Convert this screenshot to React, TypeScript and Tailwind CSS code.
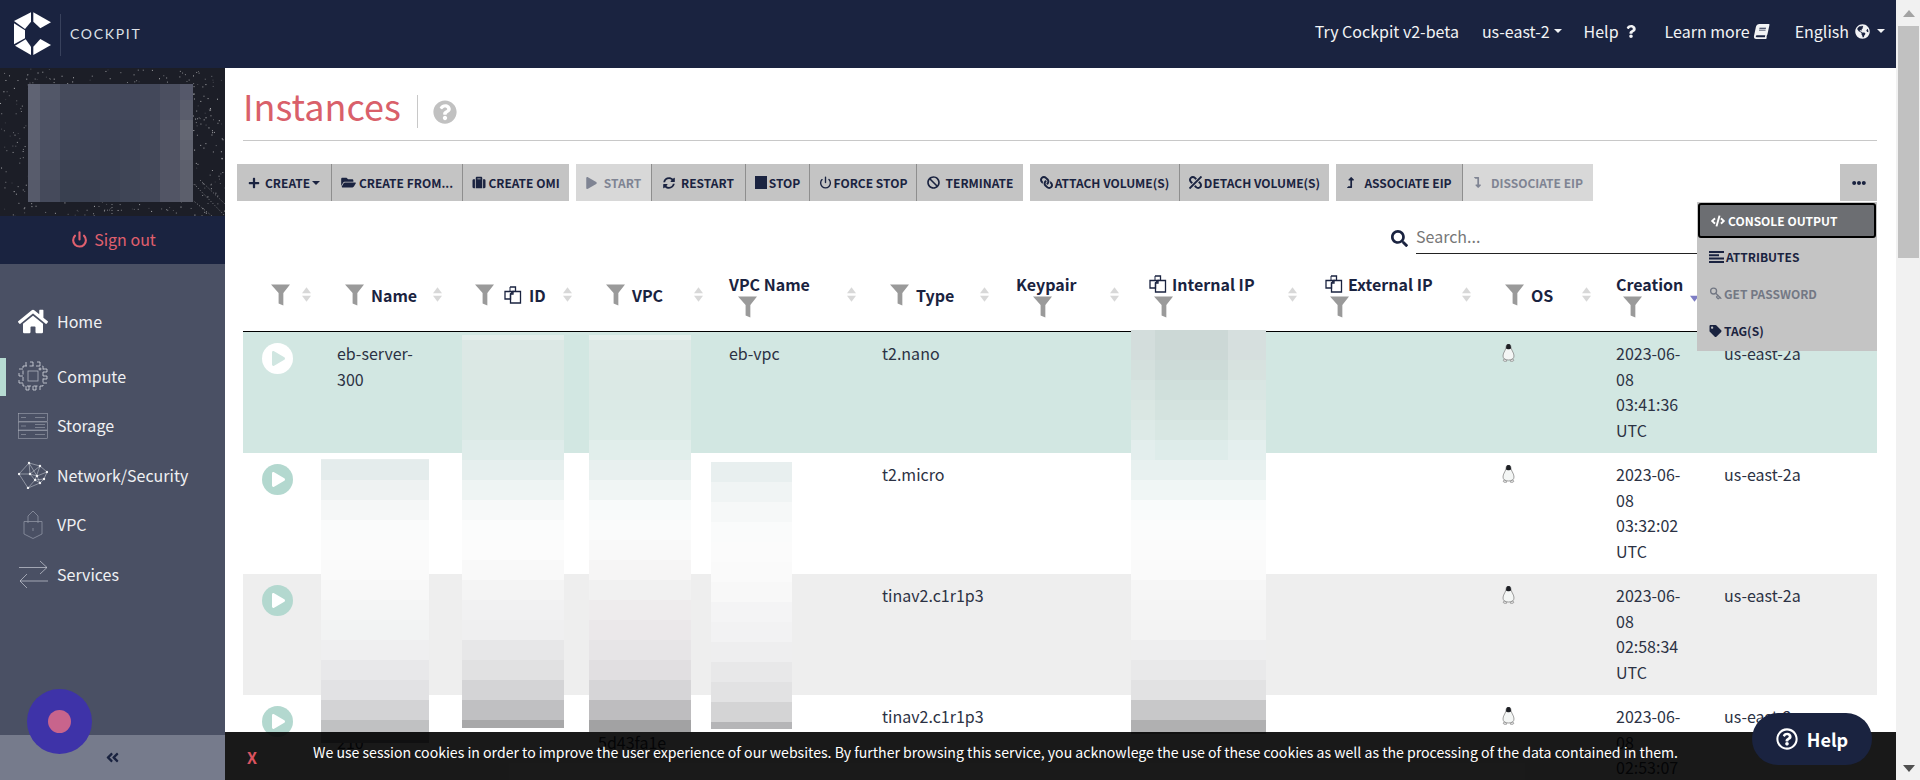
import {
  FaAngleDoubleLeft,
  FaBan,
  FaBook,
  FaCode,
  FaEllipsisH,
  FaFolderOpen,
  FaGlobeAmericas,
  FaHome,
  FaLevelDownAlt,
  FaLevelUpAlt,
  FaLink,
  FaPlay,
  FaPlus,
  FaQuestion,
  FaQuestionCircle,
  FaRegQuestionCircle,
  FaSearch,
  FaSuitcase,
  FaSyncAlt,
  FaTag,
  FaUnlink,
} from "react-icons/fa";
import { Key, Power } from "lucide-react";
import type { ReactNode } from "react";

const COLS =
  "grid grid-cols-[77px_131px_130px_131px_153px_133px_130px_178px_174px_120px_108px_169px]";

function Caret({ className = "" }: { className?: string }) {
  return (
    <span
      className={`inline-block h-0 w-0 border-x-[4px] border-t-[4px] border-x-transparent border-t-current ${className}`}
    />
  );
}

function Logo() {
  return (
    <svg viewBox="0 0 210 180" className="h-[60px] w-[70px] shrink-0" fill="#fff">
      <polygon points="27,48 78,22 78,50 60,72" />
      <polygon points="85,22 138,52 106,70 85,50" />
      <polygon points="27,55 60,76 60,100 27,118" />
      <polygon points="30,122 62,103 78,125 78,150" />
      <polygon points="85,150 85,125 106,102 138,120" />
    </svg>
  );
}

function Header() {
  return (
    <header className="flex h-[68px] shrink-0 items-center bg-[#1a2340] text-[16px] text-[#f2f3f5]">
      <div className="ml-[5px] mt-[2px] flex items-center">
        <Logo />
        <div className="ml-[-15px] h-[42px] w-px bg-[#38415c]" />
        <span className="ml-[9px] mt-[-3px] [font-family:Lato,sans-serif] text-[14px] tracking-[0.12em] text-[#dfe2e8]">
          COCKPIT
        </span>
      </div>
      <nav className="mb-[6px] ml-auto mr-[11px] flex items-center">
        <span>Try Cockpit v2-beta</span>
        <span className="ml-[23px] flex items-center gap-[4px]">
          us-east-2
          <Caret />
        </span>
        <span className="ml-[22px] flex items-center gap-[7px]">
          Help
          <FaQuestion className="h-[13px] w-[10px]" />
        </span>
        <span className="ml-[29px] flex items-center gap-[4px]">
          Learn more
          <FaBook className="h-[15px] w-[15px] -skew-x-12" />
        </span>
        <span className="ml-[26px] flex items-center gap-[6px]">
          English
          <FaGlobeAmericas className="h-[15px] w-[15px]" />
          <Caret className="ml-[1px]" />
        </span>
      </nav>
    </header>
  );
}

function Stars() {
  const dots: ReactNode[] = [];
  let seed = 17;
  const next = () => {
    seed = (seed * 16807) % 2147483647;
    return seed / 2147483647;
  };
  for (let i = 0; i < 520; i++) {
    const x = next() * 225;
    const y = next() * 148;
    dots.push(<rect key={i} x={x} y={y} width="1" height="1" fill="#fff" opacity={0.15 + next() * 0.55} />);
  }
  return (
    <svg viewBox="0 0 225 148" className="absolute inset-0 h-[148px] w-[225px]">
      {dots}
      <path d="M112 136V148M196 118L225 148M190 130L212 148M200 112L225 136" stroke="#fff" strokeOpacity=".45" strokeDasharray="1 2" />
    </svg>
  );
}

const AVATAR = [
  "bg-[#5f6373]", "bg-[#525768]", "bg-[#464b5c]", "bg-[#454a5c]", "bg-[#43485a]", "bg-[#42475a]", "bg-[#43485a]", "bg-[#4b4f60]", "bg-[#55586a]",
  "bg-[#5d6171]", "bg-[#4f5466]", "bg-[#44495c]", "bg-[#43495b]", "bg-[#41475a]", "bg-[#41475a]", "bg-[#43485a]", "bg-[#4c5062]", "bg-[#5a5d6c]",
  "bg-[#5c6070]", "bg-[#4d5264]", "bg-[#42485a]", "bg-[#40465a]", "bg-[#3e4457]", "bg-[#3f4558]", "bg-[#43485a]", "bg-[#505364]", "bg-[#646773]",
  "bg-[#5a5e6e]", "bg-[#4b5062]", "bg-[#3f4557]", "bg-[#3e4456]", "bg-[#3c4254]", "bg-[#3e4456]", "bg-[#434859]", "bg-[#505363]", "bg-[#606370]",
  "bg-[#585c6c]", "bg-[#484d5e]", "bg-[#3c4253]", "bg-[#3c4253]", "bg-[#3c4254]", "bg-[#3f4556]", "bg-[#434859]", "bg-[#515464]", "bg-[#5d606d]",
  "bg-[#565a6a]", "bg-[#454a5b]", "bg-[#394050]", "bg-[#393f50]", "bg-[#3c4253]", "bg-[#3f4556]", "bg-[#424758]", "bg-[#525565]", "bg-[#5c5f6c]",
];

function ComputeIcon() {
  return (
    <svg viewBox="0 0 30 30" className="h-[30px] w-[30px]" fill="none" stroke="#d5d8df" strokeWidth=".8">
      <path d="M5 5H25V25H5Z" strokeDasharray="4 2.500" />
      <path d="M8 1V5M12 1H15V5M19 1H22V5M8 25V29H11V25M15 25V29H18V25M22 25V29M1 8H5M1 12V15H5M1 19V22H5M25 8H29V11H25M25 15H29V18H25M25 22H29" />
      <rect x="10" y="10" width="10" height="10" stroke="#aeb2bd" />
      <circle cx="22" cy="8" r="1" />
    </svg>
  );
}

function StorageIcon() {
  return (
    <svg viewBox="0 0 30 26" className="h-[26px] w-[30px]" fill="none" stroke="#aeb2bd" strokeWidth=".5">
      <rect x=".5" y=".5" width="29" height="8" />
      <rect x=".5" y="9" width="29" height="8" />
      <rect x=".5" y="17.5" width="29" height="8" />
      <path d="M3 4.500H8M17 4.500H27M3 13H8M17 11.500H27M17 14.500H27M3 21.500H8M17 21.500H27" />
    </svg>
  );
}

function NetworkIcon() {
  const nodes = [[11, 2], [22, 5], [29, 11], [1, 13], [12, 13], [19, 15], [22, 22], [10, 27], [17, 19], [26, 18]];
  return (
    <svg viewBox="0 0 30 28" className="h-[28px] w-[30px]" fill="none" stroke="#d5d8df" strokeWidth=".5">
      <path d="M11 2L22 5L29 11L26 18L22 22L10 27L1 13L11 2L12 13L1 13M12 13L22 5M12 13L19 15L29 11M19 15L22 22M12 13L17 19L10 27M17 19L22 22M11 2L19 15M22 5L17 19M17 19L26 18" />
      {nodes.map(([x, y]) => (
        <circle key={`${x}-${y}`} cx={x} cy={y} r="1.2" fill="#f2f3f5" stroke="none" />
      ))}
    </svg>
  );
}

function VpcIcon() {
  return (
    <svg viewBox="0 0 20 29" className="h-[29px] w-[20px]" fill="none" stroke="#8f94a3" strokeWidth=".8">
      <path d="M5 13V6L10 1L15 6V13" />
      <path d="M1 11.500H19V24L10 28.500L1 24Z" />
      <path d="M10 18V21" />
    </svg>
  );
}

function ServicesIcon() {
  return (
    <svg viewBox="0 0 29 28" className="h-[28px] w-[29px]" fill="none" stroke="#c9ccd5" strokeWidth=".7">
      <path d="M0 7.500H28L21 1M28 7.500L21 14" />
      <path d="M29 21H1L8 14M1 21L8 28" />
    </svg>
  );
}

const NAV = [
  { label: "Home", icon: <FaHome className="h-[27px] w-[33px] text-white" />, text: "ml-[9px]" },
  { label: "Compute", icon: <ComputeIcon />, text: "ml-[9px]", active: true },
  { label: "Storage", icon: <StorageIcon />, text: "ml-[9px]" },
  { label: "Network/Security", icon: <NetworkIcon />, text: "ml-[9px]" },
  { label: "VPC", icon: <VpcIcon />, text: "ml-[9px]" },
  { label: "Services", icon: <ServicesIcon />, text: "ml-[9px]" },
];

function Sidebar() {
  return (
    <aside className="relative flex w-[225px] shrink-0 flex-col bg-[#4a5064] text-[16px] text-[#f0f1f3]">
      <div className="relative h-[148px] shrink-0 bg-[#1c1e27]">
        <Stars />
        <div className="absolute left-[28px] top-[16px] grid h-[118px] w-[165px] grid-cols-[12px_20px_20px_20px_20px_20px_20px_20px_13px] grid-rows-[16px_20px_20px_20px_20px_22px]">
          {AVATAR.map((c, i) => (
            <div key={i} className={c} />
          ))}
        </div>
      </div>
      <div className="flex h-[48px] shrink-0 items-center justify-center gap-[6px] bg-[#1a2340] pb-[2px] pl-[2px] text-[#e0606e]">
        <Power className="h-[17px] w-[17px]" strokeWidth={3} />
        Sign out
      </div>
      <nav className="flex-1 pt-[33px]">
        {NAV.map((item) => (
          <div
            key={item.label}
            className={`relative flex h-[49.5px] items-center pl-[18px] ${item.label === "Home" ? "mb-[5px]" : ""}`}
          >
            {item.active && <span className="absolute left-0 top-[6px] h-[38px] w-[6px] bg-[#b6dbd2]" />}
            <span className="flex w-[30px] justify-center">{item.icon}</span>
            <span className={`pb-[1px] ${item.text}`}>{item.label}</span>
          </div>
        ))}
      </nav>
      <div className="flex h-[45px] shrink-0 items-center justify-center bg-[#767b8c] text-[#1a2340]">
        <FaAngleDoubleLeft className="h-[15px] w-[15px]" />
      </div>
      <div className="absolute left-[27px] top-[621px] flex h-[65px] w-[65px] items-center justify-center rounded-full bg-[#3e33a8]">
        <div className="h-[23px] w-[23px] rounded-full bg-[#c8648c]" />
      </div>
    </aside>
  );
}

const TOOLBAR = [
  [
    { label: "Create", icon: <FaPlus className="h-[12px] w-[12px]" />, w: "w-[94px]", gap: "gap-[5px]", caret: true },
    { label: "Create from...", icon: <FaFolderOpen className="h-[13px] w-[15px]" />, w: "w-[131px]", gap: "gap-[3px]" },
    { label: "Create OMI", icon: <FaSuitcase className="h-[13px] w-[14px]" />, w: "w-[107px]", gap: "gap-[2px]" },
  ],
  [
    { label: "Start", icon: <FaPlay className="h-[12px] w-[11px]" />, w: "w-[75px]", gap: "gap-[7px]", off: true },
    { label: "Restart", icon: <FaSyncAlt className="h-[12px] w-[12px]" />, w: "w-[94px]", gap: "gap-[6px]" },
    { label: "Stop", icon: <span className="h-[13px] w-[12px] bg-[#1a2340]" />, w: "w-[64px]", gap: "gap-[2px]" },
    { label: "Force stop", icon: <Power className="h-[13px] w-[13px]" strokeWidth={2.5} />, w: "w-[107px]", gap: "gap-[2px]" },
    { label: "Terminate", icon: <FaBan className="h-[13px] w-[13px]" />, w: "w-[107px]", gap: "gap-[6px]" },
  ],
  [
    { label: "Attach volume(s)", icon: <FaLink className="h-[13px] w-[13px] -scale-x-100" />, w: "w-[149px]", gap: "gap-[2px]" },
    { label: "Detach volume(s)", icon: <FaUnlink className="h-[13px] w-[13px] -scale-x-100" />, w: "w-[150px]", gap: "gap-[2px]" },
  ],
  [
    { label: "Associate EIP", icon: <FaLevelUpAlt className="h-[11px] w-[9px]" />, w: "w-[126px]", gap: "gap-[9px]" },
    { label: "Dissociate EIP", icon: <FaLevelDownAlt className="h-[11px] w-[9px]" />, w: "w-[131px]", gap: "gap-[9px]", off: true },
  ],
];

function Toolbar() {
  return (
    <div className="ml-[-6px] mt-[23px] flex h-[37px] gap-[7px]">
      {TOOLBAR.map((group, i) => (
        <div key={i} className="flex">
          {group.map((b, j) => (
            <button
              key={b.label}
              className={`flex h-[37px] items-center justify-center text-[12px] font-bold uppercase ${b.w} ${b.gap} ${
                b.off ? "bg-[#d8d8d8] text-[#7f8493]" : "bg-[#c4c4c4] text-[#1a2340]"
              } ${j > 0 ? "border-l border-[#8e8e8e]" : ""}`}
            >
              {b.icon}
              {b.label}
              {b.caret && <Caret className="ml-[-3px]" />}
            </button>
          ))}
        </div>
      ))}
      <button className="ml-auto flex h-[37px] w-[37px] items-center justify-center bg-[#c4c4c4] text-[#1a2340]">
        <FaEllipsisH className="h-[14px] w-[14px]" />
      </button>
    </div>
  );
}

function Funnel() {
  return (
    <svg viewBox="0 0 20 22" className="h-[22px] w-[19px] shrink-0" fill="#9a9a9a">
      <path d="M0 0H20L13 9V22L8 20V9Z" />
    </svg>
  );
}

function CopyIcon() {
  return (
    <svg viewBox="0 0 18 18" className="h-[18px] w-[18px] shrink-0" fill="none" stroke="#1a2340" strokeWidth="1.3">
      <path d="M6 1H11.500V5.500M9 5.500L6.500 8V13H1V5.500Z" />
      <path d="M6 1V5.500H1" strokeWidth="1" />
      <path d="M9 5.500H16.500V17H6.500V8H9Z" />
    </svg>
  );
}

function SortArrows({ active }: { active?: boolean }) {
  return (
    <svg viewBox="0 0 10 16" className="h-[15px] w-[9px] shrink-0">
      {!active && <path d="M5 0L10 6.500H0Z" fill="#d8d8d8" />}
      <path d="M5 16L10 9.500H0Z" fill={active ? "#7d7dc4" : "#d8d8d8"} />
    </svg>
  );
}

const COLUMNS = [
  { pad: "pl-[28px]", filter: true },
  { label: "Name", pad: "pl-[25px]", filter: true },
  { label: "ID", pad: "pl-[24px]", filter: true, copy: true },
  { label: "VPC", pad: "pl-[25px]", filter: true },
  { label: "VPC Name", pad: "pl-[17px]", stacked: true, under: "ml-[9px]" },
  { label: "Type", pad: "pl-[25px]", filter: true },
  { label: "Keypair", pad: "pl-[18px]", stacked: true, under: "ml-[17px]" },
  { label: "Internal IP", pad: "pl-[21px]", stacked: true, copy: true, under: "ml-[5px]" },
  { label: "External IP", pad: "pl-[19px]", stacked: true, copy: true, under: "ml-[5px]" },
  { label: "OS", pad: "pl-[25px]", filter: true },
  { label: "Creation", pad: "pl-[16px]", stacked: true, under: "ml-[7px]", sortActive: true },
  { pad: "" },
];

function TableHead() {
  return (
    <div className={`${COLS} h-[72px] shrink-0 border-b border-black text-[16px] font-bold text-[#1a2340]`}>
      {COLUMNS.map((c, i) => (
        <div key={i} className={`flex items-center justify-between pb-[2px] pr-[9px] ${c.pad}`}>
          {c.stacked ? (
            <div className="flex flex-col">
              <span className="flex h-[24px] items-center gap-[5px] whitespace-nowrap">
                {c.copy && <CopyIcon />}
                {c.label}
              </span>
              <span className={c.under}>
                <Funnel />
              </span>
            </div>
          ) : (
            c.filter && (
              <span className="flex items-center gap-[7px]">
                <Funnel />
                {c.copy && (
                  <span className="ml-[3px] flex">
                    <CopyIcon />
                  </span>
                )}
                {c.label}
              </span>
            )
          )}
          {c.label !== undefined || c.filter ? <SortArrows active={c.sortActive} /> : null}
        </div>
      ))}
    </div>
  );
}

function Penguin() {
  return (
    <svg viewBox="0 0 13 18" className="h-[18px] w-[13px]">
      <path d="M6.500 0C4.500 0 4 2 4 4C3 7 1 9 1 12C1 14.500 3 16 6.500 16C10 16 12 14.500 12 12C12 9 10 7 9 4C9 2 8.500 0 6.500 0Z" fill="#f4f6f5" stroke="#777" strokeWidth=".7" />
      <path d="M6.500 0C4.500 0 4 2 4 4.500C5 5.500 8 5.500 9 4.500C9 2 8.500 0 6.500 0Z" fill="#1d1f24" />
      <path d="M1 16C2 14.500 4 15 5 17C3 18 1.500 17.500 1 16ZM12 16C11 14.500 9 15 8 17C10 18 11.500 17.500 12 16Z" fill="#d9d9d9" stroke="#777" strokeWidth=".5" />
    </svg>
  );
}

const ROWS = [
  {
    bg: "bg-[#d2e7e2]",
    playBg: "bg-white",
    playFg: "text-[#d0e6e1]",
    name: "eb-server-300",
    vpcName: "eb-vpc",
    type: "t2.nano",
    created: "2023-06-08 03:41:36 UTC",
  },
  { bg: "bg-white", name: "", vpcName: "", type: "t2.micro", created: "2023-06-08 03:32:02 UTC" },
  { bg: "bg-[#eeeeee]", name: "", vpcName: "", type: "tinav2.c1r1p3", created: "2023-06-08 02:58:34 UTC" },
  { bg: "bg-white", name: "210", vpc: "5d43fa1e", vpcName: "", type: "tinav2.c1r1p3", created: "2023-06-08 02:53:07 UTC" },
];

function TableRows() {
  return (
    <>
      {ROWS.map((r, i) => (
        <div key={i} className={`${COLS} h-[121px] shrink-0 text-[16px] leading-[25.7px] text-[#2c3244] ${r.bg}`}>
          <div className="pl-[19px] pt-[11px]">
            <span className={`flex h-[31px] w-[31px] items-center justify-center rounded-full ${r.playBg ?? "bg-[#b3d8cf]"}`}>
              <FaPlay className={`ml-[2px] h-[15px] w-[13px] ${r.playFg ?? "text-white"}`} />
            </span>
          </div>
          <div className="pl-[17px] pr-[30px] pt-[9px]">
            {i === 3 && <br />}
            {r.name}
          </div>
          <div />
          <div className="pl-[17px] pt-[9px]">
            {i === 3 && <br />}
            {r.vpc}
          </div>
          <div className="pl-[17px] pt-[9px]">{r.vpcName}</div>
          <div className="pl-[17px] pt-[9px]">{r.type}</div>
          <div />
          <div />
          <div />
          <div className="pl-[22px] pt-[12px]">
            <Penguin />
          </div>
          <div className="pl-[16px] pr-[20px] pt-[9px]">{r.created}</div>
          <div className="pl-[16px] pt-[9px]">us-east-2a</div>
        </div>
      ))}
    </>
  );
}

function AttributesIcon() {
  return (
    <svg viewBox="0 0 15 12" className="h-[12px] w-[15px]" fill="#1a2340">
      <path d="M0 0H15V2H0ZM0 3.300H10V5.300H0ZM0 6.600H15V8.600H0ZM0 10H15V12H0Z" />
    </svg>
  );
}

const MENU = [
  { label: "Attributes", icon: <AttributesIcon />, cls: "text-[#1a2340]" },
  { label: "Get password", icon: <Key className="h-[13px] w-[13px] rotate-90" strokeWidth={2.5} />, cls: "text-[#737884]" },
  { label: "Tag(s)", icon: <FaTag className="h-[12px] w-[13px]" />, cls: "text-[#1a2340]" },
];

function MoreMenu() {
  return (
    <div className="absolute right-[19px] top-[134px] z-10 flex h-[149px] w-[180px] flex-col bg-[#c4c4c4] text-[12px] font-bold uppercase">
      <div className="mx-px mt-px flex h-[35px] items-center gap-[3px] rounded-[3px] border-2 border-black bg-[#6c6e72] pl-[11px] text-white">
        <FaCode className="h-[12px] w-[14px]" />
        Console output
      </div>
      {MENU.map((m) => (
        <div key={m.label} className={`flex h-[37px] items-center gap-[2px] pl-[12px] ${m.cls}`}>
          {m.icon}
          {m.label}
        </div>
      ))}
    </div>
  );
}

const ID_BANDS = [
  "h-[5px] bg-[#e3edea]", "h-5 bg-[#dce8e5]", "h-5 bg-[#dbe8e4]", "h-5 bg-[#dae8e4]", "h-5 bg-[#d9e8e4]", "h-5 bg-[#dae9e5]",
  "h-5 bg-[#dfecea]", "h-5 bg-[#e6efee]", "h-5 bg-[#eef4f3]", "h-5 bg-[#f7f9f9]", "h-5 bg-[#fbfcfc]", "h-5 bg-[#fcfcfc]",
  "h-5 bg-[#f9f9f9]", "h-5 bg-[#f4f4f4]", "h-5 bg-[#f1f1f2]", "h-5 bg-[#efeff0]", "h-5 bg-[#e7e7e8]", "h-5 bg-[#e1e1e2]",
  "h-5 bg-[#d4d4d6]", "h-5 bg-[#c0c0c2]", "h-[8px] bg-[#a8a8a9]",
];
const VPC_BANDS = [
  "h-[5px] bg-[#e6efec]", "h-5 bg-[#deeae7]", "h-5 bg-[#dce9e5]", "h-5 bg-[#dbe9e5]", "h-5 bg-[#dbeae6]", "h-5 bg-[#dcebe7]",
  "h-5 bg-[#e1eeeb]", "h-5 bg-[#e8f0ef]", "h-5 bg-[#f0f5f4]", "h-5 bg-[#f8fafa]", "h-5 bg-[#fafbfb]", "h-5 bg-[#f9f9f9]",
  "h-5 bg-[#f6f5f5]", "h-5 bg-[#f1f1f1]", "h-5 bg-[#eeeced]", "h-5 bg-[#ebe8ea]", "h-5 bg-[#e7e5e7]", "h-5 bg-[#e1dfe1]",
  "h-5 bg-[#d6d5d7]", "h-5 bg-[#bebdbf]", "h-[12px] bg-[#a2a2a3]",
];
const NAME_BANDS = [
  "h-px bg-[#e8eeee]", "h-5 bg-[#e4ecec]", "h-5 bg-[#eef2f2]", "h-5 bg-[#f5f7f7]", "h-5 bg-[#fafbfb]", "h-5 bg-[#fbfbfb]",
  "h-5 bg-[#fafafa]", "h-5 bg-[#f8f8f8]", "h-5 bg-[#f4f5f5]", "h-5 bg-[#f2f3f3]", "h-5 bg-[#efeff0]", "h-5 bg-[#e8e8ea]",
  "h-5 bg-[#e2e2e4]", "h-5 bg-[#d3d3d5]", "h-5 bg-[#c0c1c2]", "h-[3px] bg-[#a5a6a8]",
];
const VPCNAME_BANDS = [
  "h-5 bg-[#e8efef]", "h-5 bg-[#f0f4f4]", "h-5 bg-[#f6f8f8]", "h-5 bg-[#fafbfb]", "h-5 bg-[#fbfbfb]",
  "h-5 bg-[#fafafa]", "h-5 bg-[#f8f8f8]", "h-5 bg-[#f4f4f5]", "h-5 bg-[#f2f2f3]", "h-5 bg-[#eeeeef]", "h-5 bg-[#e8e8e9]",
  "h-5 bg-[#e2e2e3]", "h-5 bg-[#d4d4d5]", "h-[7px] bg-[#b5b5b7]",
];
const IP_BANDS = [
  "h-[30px] bg-[#ccd8d6]", "h-5 bg-[#cddbd8]", "h-5 bg-[#d0e0dc]", "h-5 bg-[#d4e3df]", "h-5 bg-[#d8e7e3]", "h-5 bg-[#deecea]",
  "h-5 bg-[#e8f1f0]", "h-5 bg-[#f0f6f5]", "h-5 bg-[#f9fbfb]", "h-5 bg-[#fbfcfc]", "h-5 bg-[#fbfbfb]", "h-5 bg-[#fafafa]",
  "h-5 bg-[#f6f6f6]", "h-5 bg-[#f4f4f4]", "h-5 bg-[#f3f3f3]", "h-5 bg-[#eeeeef]", "h-5 bg-[#e9e9ea]", "h-5 bg-[#e2e2e3]",
  "h-5 bg-[#c8c8c9]", "h-[14px] bg-[#b0b0b1]",
];

// redaction blocks that cover the table, placed at their spot on the page
const PATCHES = [
  { cls: "left-[96px] top-[391px] w-[108px]", bands: NAME_BANDS },
  { cls: "left-[237px] top-[267px] w-[102px]", bands: ID_BANDS },
  { cls: "left-[364px] top-[267px] w-[102px]", bands: VPC_BANDS },
  { cls: "left-[486px] top-[394px] w-[81px]", bands: VPCNAME_BANDS },
  { cls: "left-[906px] top-[262px] w-[135px]", bands: IP_BANDS, edges: true },
];

function Main() {
  return (
    <main className="relative flex min-w-0 flex-1 flex-col overflow-hidden bg-white pl-[18px] pr-[19px]">
      <div className="flex h-[73px] shrink-0 items-start border-b border-[#c8c8c8] pt-[13px]">
        <h1 className="text-[36px] leading-[48px] text-[#d9606a]">Instances</h1>
        <span className="ml-[16px] mt-[14px] h-[33px] w-px bg-[#c8c8c8]" />
        <FaQuestionCircle className="ml-[15px] mt-[19px] h-[24px] w-[24px] text-[#c1c1c1]" />
      </div>
      <Toolbar />
      <div className="flex h-[59px] shrink-0 items-start justify-end pt-[17px]">
        <FaSearch className="mr-[8px] mt-[12px] h-[17px] w-[17px] text-[#1a2340]" />
        <div className="flex h-[36px] w-[461px] items-center border-b border-[#222] text-[16px] text-[#777]">
          Search...
        </div>
      </div>
      <TableHead />
      <TableRows />
      {PATCHES.map((p, i) => (
        <div key={i} className={`absolute flex flex-col ${p.cls}`}>
          {p.bands.map((b, j) => (
            <div key={j} className={`shrink-0 ${b}`} />
          ))}
          {p.edges && (
            <>
              <div className="absolute left-0 top-0 h-[130px] w-[24px] bg-white/15" />
              <div className="absolute right-0 top-0 h-[130px] w-[38px] bg-white/20" />
            </>
          )}
        </div>
      ))}
      <MoreMenu />
      <div className="absolute inset-x-0 bottom-0 z-20 flex h-[48px] items-start bg-black/90 text-[14.1px] text-white">
        <span className="ml-[22px] mt-[13px] text-[16px] font-bold text-[#d9535f]">X</span>
        <span className="ml-[56px] mt-[10px]">
          We use session cookies in order to improve the user experience of our websites. By further browsing this service, you acknowlege the use of these cookies as well as the processing of the data contained in them.
        </span>
      </div>
      <button className="absolute bottom-[15px] right-[24px] z-30 flex h-[52px] w-[120px] items-center justify-center gap-[9px] rounded-[26px] bg-[#1a2340] text-[18px] font-bold text-white">
        <FaRegQuestionCircle className="h-[22px] w-[22px]" />
        Help
      </button>
    </main>
  );
}

function Scrollbar() {
  return (
    <div className="flex w-[24px] shrink-0 flex-col items-center bg-[#f1f1f1] pl-px">
      <div className="mt-[10px] h-0 w-0 border-x-[6px] border-b-[7px] border-x-transparent border-b-[#a3a3a3]" />
      <div className="mt-[9px] h-[232px] w-[21px] bg-[#c1c1c1]" />
      <div className="mt-auto mb-[8px] h-0 w-0 border-x-[6px] border-t-[7px] border-x-transparent border-t-[#505050]" />
    </div>
  );
}

export default function App() {
  return (
    <div className="flex h-[780px] w-[1920px] overflow-hidden [font-family:'Noto_Sans_CJK_SC',sans-serif]">
      <div className="flex min-w-0 flex-1 flex-col">
        <Header />
        <div className="flex min-h-0 flex-1">
          <Sidebar />
          <Main />
        </div>
      </div>
      <Scrollbar />
    </div>
  );
}
